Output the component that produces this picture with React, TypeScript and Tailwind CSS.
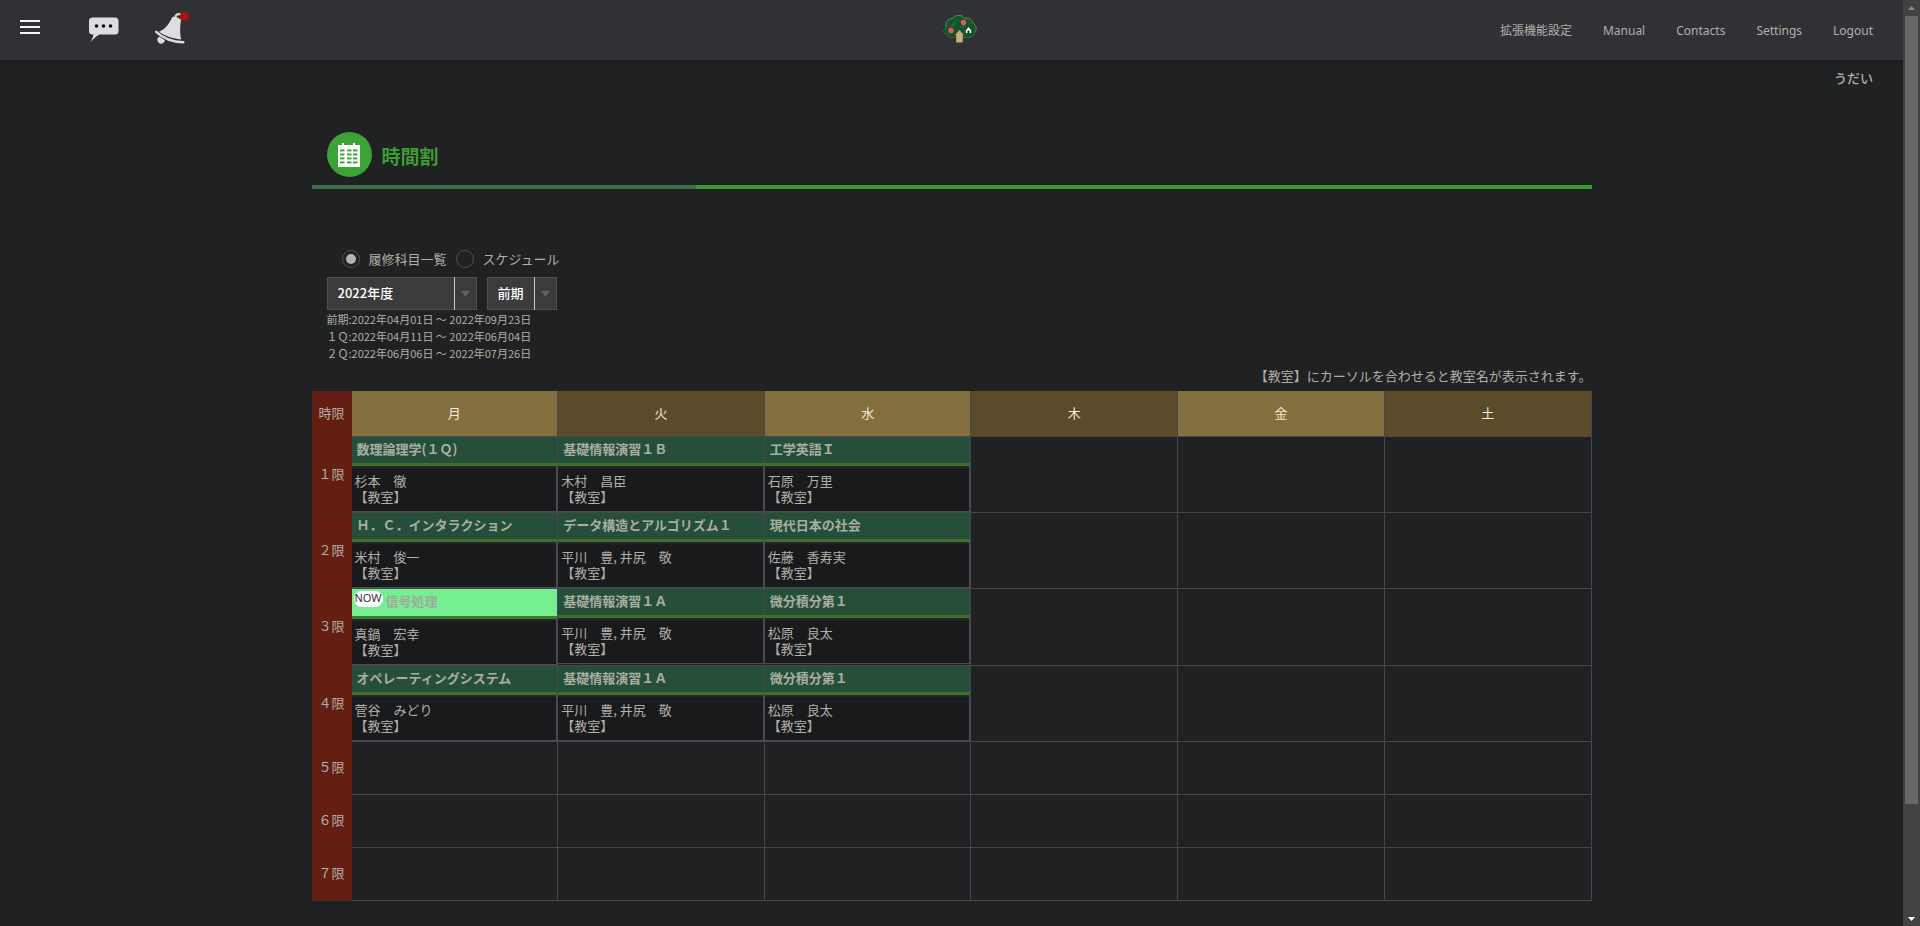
import React from "react";

type Course = { title: string; teacher: string; now?: boolean };

const days = ["月", "火", "水", "木", "金", "土"];

const periods: { label: string; courses: Course[] }[] = [
  {
    label: "１限",
    courses: [
      { title: "数理論理学(１Ｑ)", teacher: "杉本　徹" },
      { title: "基礎情報演習１Ｂ", teacher: "木村　昌臣" },
      { title: "工学英語Ｉ", teacher: "石原　万里" },
    ],
  },
  {
    label: "２限",
    courses: [
      { title: "Ｈ．Ｃ．インタラクション", teacher: "米村　俊一" },
      { title: "データ構造とアルゴリズム１", teacher: "平川　豊, 井尻　敬" },
      { title: "現代日本の社会", teacher: "佐藤　香寿実" },
    ],
  },
  {
    label: "３限",
    courses: [
      { title: "信号処理", teacher: "真鍋　宏幸", now: true },
      { title: "基礎情報演習１Ａ", teacher: "平川　豊, 井尻　敬" },
      { title: "微分積分第１", teacher: "松原　良太" },
    ],
  },
  {
    label: "４限",
    courses: [
      { title: "オペレーティングシステム", teacher: "菅谷　みどり" },
      { title: "基礎情報演習１Ａ", teacher: "平川　豊, 井尻　敬" },
      { title: "微分積分第１", teacher: "松原　良太" },
    ],
  },
  { label: "５限", courses: [] },
  { label: "６限", courses: [] },
  { label: "７限", courses: [] },
];

const links = ["拡張機能設定", "Manual", "Contacts", "Settings", "Logout"];

function MenuIcon() {
  return (
    <svg width="20" height="14" viewBox="0 0 20 14" fill="#f4f4f4" aria-hidden="true">
      <rect width="20" height="2" />
      <rect y="6" width="20" height="2" />
      <rect y="12" width="20" height="2" />
    </svg>
  );
}

function ChatIcon() {
  return (
    <svg width="30" height="26" viewBox="0 0 30 26" aria-hidden="true">
      <path
        d="M3.500 0.500h22.500a3.500 3.500 0 0 1 3.500 3.500v10a3.500 3.500 0 0 1 -3.500 3.500H10.500C7 19.500 4 22 1.300 25.300C2.800 22.500 4.200 20 4.500 17.500H3.500a3.500 3.500 0 0 1 -3.500 -3.500V4a3.500 3.500 0 0 1 3.500 -3.500z"
        fill="#dcdde0"
      />
      <circle cx="7.500" cy="9" r="1.800" fill="#0b0b0c" />
      <circle cx="14.500" cy="9" r="1.800" fill="#0b0b0c" />
      <circle cx="21.500" cy="9" r="1.800" fill="#0b0b0c" />
    </svg>
  );
}

function BellIcon() {
  return (
    <svg width="36" height="34" viewBox="0 0 36 34" aria-hidden="true">
      <path d="M20.300 7C20.300 3.500 23 2.300 25.600 3.600" fill="none" stroke="#dcdde0" strokeWidth="2.200" />
      <path
        d="M17.500 5.800C20 5.200 24.500 6.800 26 8.800C25.300 14 24.500 21 26.200 28.500C17.500 27.800 10 25.300 4 20.800C11 18 14.500 12 17.500 5.800z"
        fill="#dcdde0"
      />
      <path
        d="M1.200 20.800C7.500 26.800 16.500 30.800 28.300 31.300"
        fill="none"
        stroke="#dcdde0"
        strokeWidth="2.400"
        strokeLinecap="round"
      />
      <path d="M4 25.800C6.500 27 8 28 9.900 29.200A3.800 3.800 0 1 1 4 25.800z" fill="#dcdde0" />
      <circle cx="29.500" cy="5.500" r="4.600" fill="#ab1408" />
    </svg>
  );
}

function TreeLogo() {
  return (
    <svg width="36" height="30" viewBox="0 0 36 30" aria-hidden="true">
      <path
        d="M1 17.500C2 15.500 3.200 14.300 4.200 13.500C2.500 8.500 6 4.500 11 4.300C12 2 15 1 18 1.500C20 1.800 21.500 2.800 22.300 4.300C26.500 3.300 30.300 5.500 31 9C34.500 11.500 35 16 32.800 18.500C32.500 22 28.500 24.500 24 23.500H10.500C7.500 24 5.500 22 4.700 19.500C3.200 19.800 1.800 19 1 17.500z"
        fill="#14532c"
        stroke="#2a7040"
        strokeWidth="1"
      />
      <path
        d="M4.200 13.500C2.500 8.500 6 4.500 11 4.300C12 2 15 1 18 1.500C20 1.800 21.500 2.800 22.300 4.300C26.500 3.300 30.300 5.500 31 9C34.500 11.500 35 16 32.800 18.500"
        fill="none"
        stroke="#6b8a5c"
        strokeWidth="0.700"
      />
      <path d="M9 13L14 8M18 13L24 12" stroke="#1f6b39" strokeWidth="2" />
      <path d="M17.500 16L21.800 21H20.800V28.500H14.200V21H13.200z" fill="#c9ad75" />
      <circle cx="21.500" cy="8.500" r="2.700" fill="#e95554" />
      <circle cx="9" cy="16.500" r="2.700" fill="#e95554" />
      <path d="M26.500 13L29.200 16.500V19H23.800V16.500z" fill="#ffffff" />
      <rect x="25.500" y="16.500" width="2" height="2.500" fill="#14301f" />
    </svg>
  );
}

function CalendarIcon() {
  const rows = [6, 10, 14, 18];
  const columns = [2, 9, 15];
  return (
    <svg width="22" height="24" viewBox="0 0 22 24" aria-hidden="true">
      <path d="M0 2H4V0H6V2H15V0H17V2H22V24H0z" fill="#ffffff" />
      {rows.map((y) =>
        columns.map((x) => <rect key={`${x}-${y}`} x={x} y={y + 0.5} width="4.500" height="1.900" fill="#3ba336" />),
      )}
    </svg>
  );
}

function SelectBox({ label, options, className }: { label: string; options: string[]; className: string }) {
  return (
    <div className={`relative h-[33px] ${className}`}>
      <select
        aria-label={label}
        className="size-full appearance-none border border-[#4d4f52] bg-[#3b3b3b] pr-6 pb-[2px] pl-[10px] text-[13px] font-medium text-white"
      >
        {options.map((option) => (
          <option key={option}>{option}</option>
        ))}
      </select>
      <div className="pointer-events-none absolute inset-y-0 right-0 flex w-[23px] items-center justify-center border-l border-[#c8c8c8]">
        <svg width="9" height="6" viewBox="0 0 9 6" aria-hidden="true">
          <path d="M0 0H9L4.500 6z" fill="#5f6163" />
        </svg>
      </div>
    </div>
  );
}

function ViewOption({ label, defaultChecked }: { label: string; defaultChecked?: boolean }) {
  return (
    <label className="flex items-center gap-[9px]">
      <input
        type="radio"
        name="view"
        defaultChecked={defaultChecked}
        className="size-[18px] appearance-none rounded-full border border-[#4d4f52] bg-clip-content p-[3px] checked:bg-[#b4b2ae]"
      />
      {label}
    </label>
  );
}

function CourseCell({ course }: { course: Course }) {
  return (
    <div>
      {course.now ? (
        <div className="flex h-[30px] border-b-3 border-[#3a7d2c] bg-[#76ef91] pl-[2px]">
          <span className="mt-[2px] h-4 w-[29px] rounded-full bg-white text-center font-['Noto_Sans',sans-serif] text-[11px] leading-[14px] text-[#333333]">
            NOW
          </span>
          <a href="#course" className="ml-[3px] text-[13px] leading-6 font-bold text-[#9fab9b]">
            {course.title}
          </a>
        </div>
      ) : (
        <div className="h-[29px] border-b-3 border-[#426e2b] bg-[#264f3a] pl-[5px]">
          <a href="#course" className="block text-[13px] leading-6 font-bold text-[#a9aea3]">
            {course.title}
          </a>
        </div>
      )}
      <div className="h-[46px] border-r border-b border-[#4b4d50] bg-[#191a1c] pt-[7px] pl-[3px] leading-4 shadow-[inset_0_3px_2px_-1px_#26292a]">
        <p>{course.teacher}</p>
        <p>【教室】</p>
      </div>
    </div>
  );
}

function Scrollbar() {
  return (
    <div className="sticky top-0 flex h-screen w-[17px] shrink-0 flex-col items-center bg-[#424242]" aria-hidden="true">
      <div className="flex h-4 items-center">
        <svg width="7" height="4" viewBox="0 0 7 4">
          <path d="M0 4H7L3.500 0z" fill="#8a8a8a" />
        </svg>
      </div>
      <div className="flex w-[13px] grow flex-col">
        <div className="h-[88%] bg-[#686868]" />
      </div>
      <div className="flex h-[14px] items-center">
        <svg width="7" height="4" viewBox="0 0 7 4">
          <path d="M0 0H7L3.500 4z" fill="#ffffff" />
        </svg>
      </div>
    </div>
  );
}

export default function App() {
  return (
    <div className="flex min-h-screen bg-[#202122] font-['Noto_Sans_CJK_JP',sans-serif] text-[13px] text-[#b2afa9]">
      <div className="min-w-0 grow pb-5">
        <header className="grid h-[60px] grid-cols-[1fr_auto_1fr] items-center border-b border-[#37383b] bg-[#303134] shadow-[0_2px_4px_#18191a]">
          <div className="flex items-center pl-5">
            <button type="button" aria-label="メニュー" className="mb-[6px]">
              <MenuIcon />
            </button>
            <button type="button" aria-label="メッセージ" className="ml-[49px]">
              <ChatIcon />
            </button>
            <button type="button" aria-label="お知らせ" className="mb-1 ml-9">
              <BellIcon />
            </button>
          </div>
          <a href="#home" aria-label="ホーム" className="mb-[2px] ml-4">
            <TreeLogo />
          </a>
          <nav className="flex justify-end gap-[31px] pt-[2px] pr-[30px] font-['Noto_Sans','Noto_Sans_CJK_JP',sans-serif] text-xs">
            {links.map((link) => (
              <a key={link} href="#link">
                {link}
              </a>
            ))}
          </nav>
        </header>

        <p className="pt-2 pr-[30px] text-right leading-5 font-medium">うだい</p>

        <main className="mx-auto max-w-7xl">
          <div className="mt-11 flex items-center gap-[10px] pb-2 pl-[15px]">
            <div className="flex size-[45px] items-center justify-center rounded-full bg-[#3ba336]">
              <CalendarIcon />
            </div>
            <h1 className="pt-[2px] text-[19px] leading-7 font-bold text-[#3c9d36]">時間割</h1>
          </div>
          <div className="h-1 bg-[#3c9a33]">
            <div className="h-full w-[30%] bg-[#3f6e4b]" />
          </div>

          <div className="mt-[60px] flex gap-[9px] pl-[30px] leading-5">
            <ViewOption label="履修科目一覧" defaultChecked />
            <ViewOption label="スケジュール" />
          </div>
          <div className="mt-2 flex gap-[10px] pl-[15px]">
            <SelectBox label="年度" options={["2022年度"]} className="w-[150px]" />
            <SelectBox label="学期" options={["前期", "後期"]} className="w-[70px]" />
          </div>
          <div className="mt-[1px] pl-[15px] text-[11px] leading-[17px]">
            <p>前期:2022年04月01日 〜 2022年09月23日</p>
            <p>１Ｑ:2022年04月11日 〜 2022年06月04日</p>
            <p>２Ｑ:2022年06月06日 〜 2022年07月26日</p>
          </div>
          <p className="mt-1 mb-[5px] text-right leading-5">【教室】にカーソルを合わせると教室名が表示されます。</p>

          <table className="w-full table-fixed border-separate border-spacing-0">
            <thead>
              <tr className="h-[46px]">
                <th className="w-10 border-b border-[#4f2a20] bg-[#651e12] p-0 pb-[2px] font-normal">時限</th>
                {days.map((day) => (
                  <th
                    key={day}
                    scope="col"
                    className="border-r border-b border-[#45474a] p-0 pb-[2px] font-normal text-[#f1ead9] odd:bg-[#5b4b2a] even:bg-[#84703f]"
                  >
                    {day}
                  </th>
                ))}
              </tr>
            </thead>
            <tbody>
              {periods.map((period) => (
                <tr key={period.label} className="h-[53px]">
                  <th scope="row" className="border-b border-[#4f2a20] bg-[#651e12] p-0 pb-[2px] font-normal">
                    {period.label}
                  </th>
                  {days.map((day, index) => {
                    const course = period.courses[index];
                    return (
                      <td
                        key={day}
                        className={
                          course
                            ? "border-r border-b border-[#45474a] p-0 align-top"
                            : "border-r border-b border-[#45474a] p-0"
                        }
                      >
                        {course && <CourseCell course={course} />}
                      </td>
                    );
                  })}
                </tr>
              ))}
            </tbody>
          </table>
        </main>
      </div>
      <Scrollbar />
    </div>
  );
}
